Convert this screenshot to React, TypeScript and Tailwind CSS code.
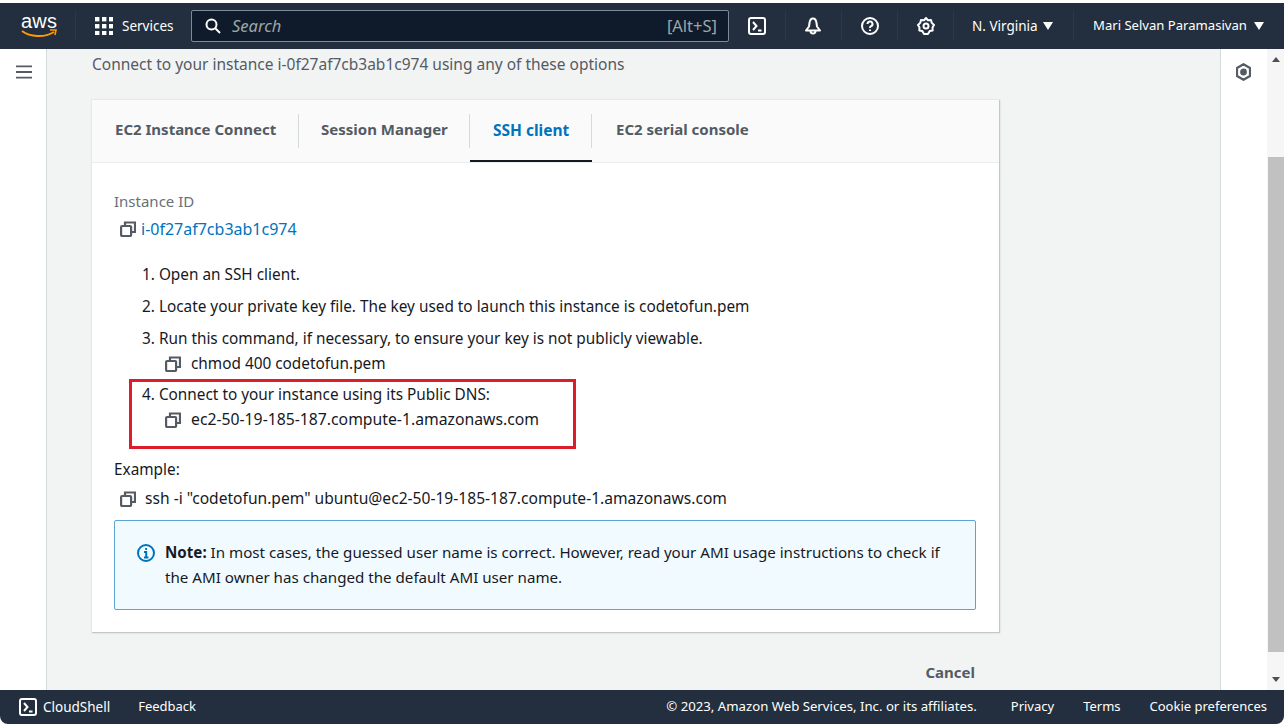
import React from "react";

const CopyIcon = ({ className = "" }: { className?: string }) => (
  <svg viewBox="0 0 16 16" className={`w-4 h-4 shrink-0 ${className}`} fill="none" stroke="#545b64" strokeWidth="2.2">
    <rect x="1.100" y="5" width="10" height="10" rx="1" />
    <path d="M5 5V1.500h10V11h-4" />
  </svg>
);

const NavDivider = () => <div className="w-px h-[30px] bg-[#2c3848]" />;

const Caret = () => (
  <svg viewBox="0 0 10 8" className="w-[10px] h-[8px]" fill="#fff">
    <path d="M0 0h10L5 8z" />
  </svg>
);

const Item = ({ n, className = "", children }: { n: number; className?: string; children: React.ReactNode }) => (
  <div className={`h-6 leading-6 pl-[28px] text-[#16191f] ${className}`}>
    {n}. {children}
  </div>
);

const Cmd = ({ className = "", children }: { className?: string; children: React.ReactNode }) => (
  <div className={`flex items-center h-6 pl-[51px] mt-[2px] text-[#16191f] ${className}`}>
    <CopyIcon className="mr-[10px]" />
    <span>{children}</span>
  </div>
);

export default function App() {
  return (
    <div className="w-[1284px] h-[724px] overflow-hidden bg-white flex flex-col pt-[3px] font-['Noto_Sans','Open_Sans',sans-serif] text-[15.35px]">
      <header className="h-[46px] shrink-0 bg-[#232f3e] text-white flex items-center text-[13.5px]">
        <div className="w-[75px] pl-[21px] flex flex-col items-start">
          <span className="font-['Liberation_Sans',sans-serif] text-[20px] leading-[17px] tracking-[0.2px]">aws</span>
          <svg viewBox="0 0 36 10" className="w-9 h-[10px] -mt-[1px]" fill="none">
            <path d="M1 2c8 6 22 7 32 1" stroke="#f90" strokeWidth="2" />
            <path d="M29 1h6l-1 5" stroke="#f90" strokeWidth="1.6" />
          </svg>
        </div>
        <NavDivider />
        <svg viewBox="0 0 18 18" className="w-[18px] h-[18px] ml-[19px]" fill="#fff">
          {[0, 7, 14].flatMap((x) =>
            [0, 7, 14].map((y) => <rect key={`${x}-${y}`} x={x} y={y} width="4.4" height="4.4" />)
          )}
        </svg>
        <span className="ml-[9px] w-[69px]">Services</span>
        <div className="w-[538px] h-8 rounded-[2px] border border-[#7d8998] bg-[#0f1b2a] flex items-center px-[11px]">
          <svg viewBox="0 0 16 16" className="w-4 h-4 ml-[2px]" fill="none" stroke="#fff" strokeWidth="2">
            <circle cx="6.500" cy="6.500" r="5" />
            <path d="M10.500 10.500 15 15" />
          </svg>
          <span className="ml-[11px] italic text-[#9ba7a9] text-[16.5px]">Search</span>
          <span className="ml-auto text-[#9ba7a9] text-[16.5px]">[Alt+S]</span>
        </div>
        <div className="w-[56px] flex items-center justify-center">
          <svg viewBox="0 0 18 18" className="w-[18px] h-[18px]" fill="none" stroke="#fff" strokeWidth="2">
            <rect x="1" y="1" width="16" height="16" rx="2" />
            <path d="m5 5 3.500 4L5 13M10 13.500h3.500" />
          </svg>
        </div>
        <NavDivider />
        <div className="w-[55px] pr-[2px] flex items-center justify-center">
          <svg viewBox="0 0 18 18" className="w-[18px] h-[18px]" fill="none" stroke="#fff" strokeWidth="2">
            <path d="M9 1.500C6.800 1.500 5.800 3.500 5.500 6L5 9.500 2 13.500h14l-3-4L12.500 6C12.200 3.500 11.200 1.500 9 1.500z" strokeLinejoin="round" />
            <path d="M6.500 14a2.500 2.500 0 0 0 5 0" />
          </svg>
        </div>
        <NavDivider />
        <div className="w-[55px] flex items-center justify-center">
          <svg viewBox="0 0 18 18" className="w-[18px] h-[18px]" fill="none" stroke="#fff" strokeWidth="2">
            <circle cx="9" cy="9" r="8" />
            <path d="M6.500 7a2.500 2.500 0 1 1 3.600 2.200C9.300 9.600 9 10 9 11" />
            <path d="M9 12.500v1.600" />
          </svg>
        </div>
        <NavDivider />
        <div className="w-[55px] flex items-center justify-center">
          <svg viewBox="0 0 18 18" className="w-[18px] h-[18px]" fill="none" stroke="#fff" strokeWidth="2">
            <path d="M9 1l2 2.300 3-.3.800 2.900 2.200 2.100L15.500 10.500l.2 3-3 .6L11 17H7l-1.700-2.900-3-.6.2-3L1 8l2.200-2.100L4 3l3 .3z" strokeLinejoin="round" />
            <circle cx="9" cy="9" r="2.500" />
          </svg>
        </div>
        <NavDivider />
        <div className="w-[119px] pl-[18px] flex items-center gap-[5px]">
          <span>N. Virginia</span>
          <Caret />
        </div>
        <NavDivider />
        <div className="pl-[19px] flex items-center gap-[7px] text-[13.1px]">
          <span className="whitespace-nowrap">Mari Selvan Paramasivan</span>
          <Caret />
        </div>
      </header>

      <div className="flex-1 flex min-h-0">
        <aside className="w-[47px] shrink-0 bg-white border-r border-[#d5dbdb] pt-[16px] pl-[16px]">
          <svg viewBox="0 0 17 14" className="w-4 h-[14px]" fill="none" stroke="#545b64" strokeWidth="2">
            <path d="M0 1h17M0 7h17M0 13h17" />
          </svg>
        </aside>

        <main className="flex-1 min-w-0 bg-[#f2f3f3] overflow-hidden pl-[45px] pr-[220px] pt-[3px]">
          <p className="h-6 leading-6 text-[#545b64] text-[15.5px] whitespace-nowrap">
            Connect to your instance i-0f27af7cb3ab1c974 using any of these options
          </p>
          <section className="mt-[24px] w-[908px] h-[533px] bg-white border-r border-b border-[#c4c7c9] shadow-[0_0_2px_rgba(0,28,36,0.15)]">
            <div className="h-[63px] bg-[#fafafa] border-b border-[#eaeded] flex font-bold text-[#545b64] text-[15px]">
              <div className="w-[207px] pl-[23px] pb-[4px] pr-4 flex items-center relative whitespace-nowrap">
                EC2 Instance Connect
                <span className="absolute right-0 top-[14px] h-[34px] w-px bg-[#d5dbdb]" />
              </div>
              <div className="w-[171px] pl-[22px] pb-[4px] flex items-center relative whitespace-nowrap">
                Session Manager
                <span className="absolute right-0 top-[14px] h-[34px] w-px bg-[#d5dbdb]" />
              </div>
              <div className="w-[122px] pl-[23px] pt-[1px] flex items-center relative whitespace-nowrap text-[#0073bb] text-[15.5px] border-b-2 border-[#16191f]">
                SSH client
                <span className="absolute right-0 top-[14px] h-[34px] w-px bg-[#d5dbdb]" />
              </div>
              <div className="pl-[24px] pb-[4px] flex items-center whitespace-nowrap">EC2 serial console</div>
            </div>

            <div className="pl-[22px] pr-[23px] pt-[26px]">
              <div className="h-6 leading-6 text-[#687078] text-[15px]">Instance ID</div>
              <div className="mt-[4px] flex items-center h-6 pl-[6px]">
                <CopyIcon className="mr-[5px]" />
                <span className="text-[#0073bb] text-[16px]">i-0f27af7cb3ab1c974</span>
              </div>

              <div className="mt-[21px]"><Item n={1}>Open an SSH client.</Item></div>
              <div className="mt-2"><Item n={2}>Locate your private key file. The key used to launch this instance is codetofun.pem</Item></div>
              <div className="mt-2"><Item n={3}>Run this command, if necessary, to ensure your key is not publicly viewable.</Item></div>
              <Cmd>chmod 400 codetofun.pem</Cmd>
              <div className="mt-[6px] relative">
                <Item n={4}>Connect to your instance using its Public DNS:</Item>
                <Cmd className="text-[15.75px]">ec2-50-19-185-187.compute-1.amazonaws.com</Cmd>
                <div className="absolute left-[15px] top-[-3px] w-[447px] h-[70px] border-[3px] border-[#dd1c2c]" />
              </div>

              <div className="mt-[25px] h-6 leading-6 text-[#16191f]">Example:</div>
              <div className="mt-[6px] flex items-center h-6 pl-[6px] text-[#16191f] text-[15.6px] whitespace-nowrap">
                <CopyIcon className="mr-[9px]" />
                <span>ssh -i "codetofun.pem" ubuntu@ec2-50-19-185-187.compute-1.amazonaws.com</span>
              </div>

              <div className="mt-[9px] h-[90px] rounded-[2px] border border-[#5ba4d4] bg-[#f1faff] flex pl-[22px] pr-4 pt-[19px] text-[#16191f] text-[15.15px]">
                <svg viewBox="0 0 18 18" className="w-[18px] h-[18px] mt-[4px] shrink-0" fill="none" stroke="#0073bb" strokeWidth="2">
                  <circle cx="9" cy="9" r="8" />
                  <path d="M7 8h2.200v5M7 13.500h4.400M8.200 5h1.800" />
                </svg>
                <p className="ml-[10px] leading-[25px]">
                  <b>Note:</b> In most cases, the guessed user name is correct. However, read your AMI usage instructions to check if the AMI owner has changed the default AMI user name.
                </p>
              </div>
            </div>
          </section>
          <div className="mt-[27px] w-[883px] text-right font-bold text-[#545b64] text-[15px] leading-6">Cancel</div>
        </main>

        <aside className="w-[47px] shrink-0 bg-white border-l border-[#d5dbdb] pt-[14px] pl-[15px]">
          <svg viewBox="0 0 15 18" className="w-[15px] h-[18px]" fill="none" stroke="#545b64" strokeWidth="2.2">
            <path d="M7.500 1.200 14 5v8l-6.500 3.800L1 13V5z" strokeLinejoin="round" />
            <circle cx="7.500" cy="9" r="2.300" fill="#545b64" />
          </svg>
        </aside>

        <div className="w-[17px] shrink-0 bg-[#f6f6f6] flex flex-col items-center">
          <svg viewBox="0 0 8 5" className="w-2 h-[5px] mt-2" fill="#505050"><path d="M4 0l4 5H0z" /></svg>
          <div className="mt-[95px] w-4 h-[495px] bg-[#c1c1c1]" />
          <svg viewBox="0 0 8 5" className="w-2 h-[5px] mt-[25px]" fill="#505050"><path d="M0 0h8L4 5z" /></svg>
        </div>
      </div>

      <footer className="h-[34px] shrink-0 bg-[#232f3e] rounded-b-[8px] text-white text-[13px] flex items-center pl-[19px] pr-[17px] whitespace-nowrap">
        <svg viewBox="0 0 18 18" className="w-[18px] h-[18px]" fill="none" stroke="#fff" strokeWidth="2">
          <rect x="1" y="1" width="16" height="16" rx="2" />
          <path d="m5 5 3.500 4L5 13M10 13.500h3.500" />
        </svg>
        <span className="ml-[6px] text-[13.5px]">CloudShell</span>
        <span className="ml-[28px]">Feedback</span>
        <span className="ml-auto text-[13.2px]">© 2023, Amazon Web Services, Inc. or its affiliates.</span>
        <span className="ml-[34px]">Privacy</span>
        <span className="ml-[29px]">Terms</span>
        <span className="ml-[29px]">Cookie preferences</span>
      </footer>
    </div>
  );
}
